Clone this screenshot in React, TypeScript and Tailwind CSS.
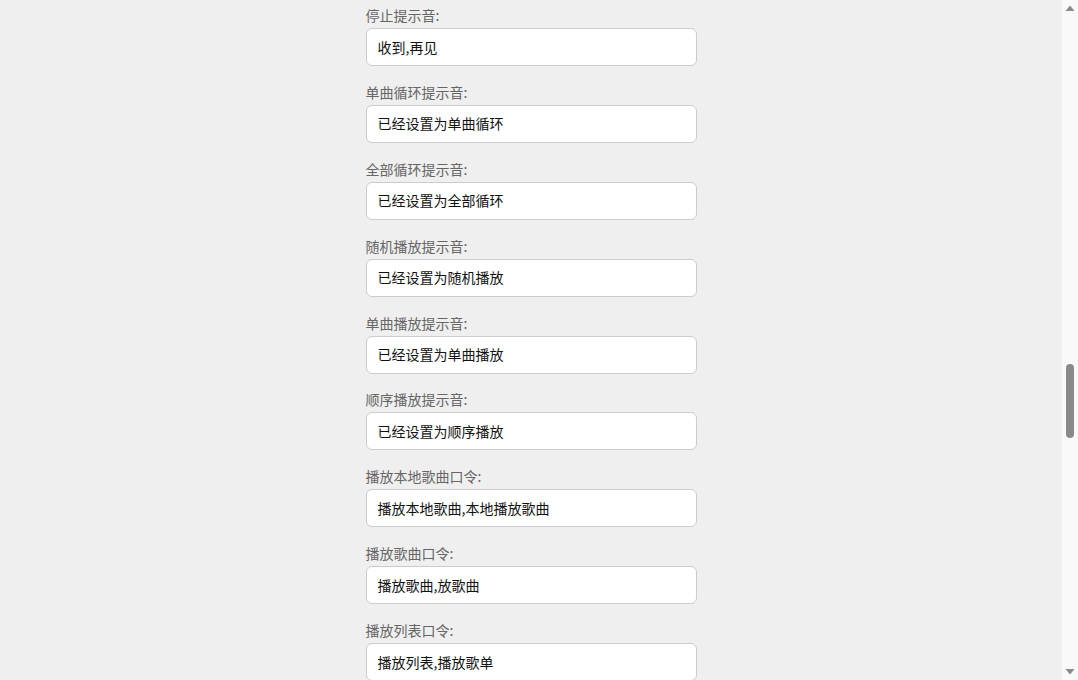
import React from 'react';

const fields = [
  { label: '停止提示音:', value: '收到,再见' },
  { label: '单曲循环提示音:', value: '已经设置为单曲循环' },
  { label: '全部循环提示音:', value: '已经设置为全部循环' },
  { label: '随机播放提示音:', value: '已经设置为随机播放' },
  { label: '单曲播放提示音:', value: '已经设置为单曲播放' },
  { label: '顺序播放提示音:', value: '已经设置为顺序播放' },
  { label: '播放本地歌曲口令:', value: '播放本地歌曲,本地播放歌曲' },
  { label: '播放歌曲口令:', value: '播放歌曲,放歌曲' },
  { label: '播放列表口令:', value: '播放列表,播放歌单' },
];

function Scrollbar() {
  return (
    <div className="w-[16px] h-full bg-[#f9f9f9] flex flex-col items-center shrink-0">
      <svg width="16" height="16" viewBox="0 0 16 16" className="shrink-0">
        <path d="M3.5 11 L8 5.5 L12.5 11 Z" fill="#8a8a8a" />
      </svg>
      <div className="flex-1 w-full flex flex-col items-center pt-[348px]">
        <div className="w-[8px] h-[74px] rounded-full bg-[#8a8a8a]" />
      </div>
      <svg width="16" height="16" viewBox="0 0 16 16" className="shrink-0">
        <path d="M3.5 5 L8 10.5 L12.5 5 Z" fill="#8a8a8a" />
      </svg>
    </div>
  );
}

export default function App() {
  return (
    <div
      className="w-[1078px] h-[680px] flex overflow-hidden bg-[#efefef] antialiased"
      style={{ fontFamily: '"Noto Sans CJK SC", "Liberation Sans", sans-serif' }}
    >
      <div className="flex-1 overflow-hidden">
        <div className="w-[331px] mx-auto pt-[5px] flex flex-col gap-[15.9px]">
          {fields.map((f) => (
            <div key={f.label} className="flex flex-col">
              <label className="text-[14px] leading-[20px] text-[#666] mb-[3px]">{f.label}</label>
              <input
                readOnly
                value={f.value}
                className="h-[38px] w-full bg-white border border-[#cccccc] rounded-[6px] px-[11px] pb-[1px] text-[14px] text-[#111] outline-none"
              />
            </div>
          ))}
        </div>
      </div>
      <Scrollbar />
    </div>
  );
}
